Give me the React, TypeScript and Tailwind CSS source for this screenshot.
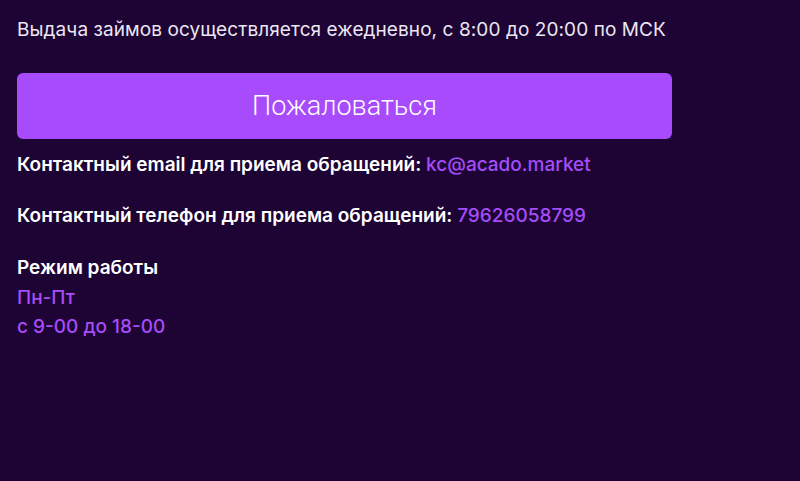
export default function App() {
  return (
    <div className="min-h-screen w-full bg-[#1d0434] px-[17px] pt-[18px] font-['Inter',sans-serif] text-white">
      <p className="text-[19px] leading-[24px] tracking-[0.08px] text-[#ece6f2]">
        Выдача займов осуществляется ежедневно, с 8:00 до 20:00 по МСК
      </p>

      <button className="mt-[31px] flex h-[66px] w-[655px] items-center justify-center rounded-[6px] bg-[#a74bfd] font-['Roboto',sans-serif] text-[27px] font-light text-white">
        Пожаловаться
      </button>

      <p className="mt-[14px] text-[19px] font-semibold leading-[24px]">
        Контактный email для приема обращений:{" "}
        <span className="font-medium text-[#a64cf8]">kc@acado.market</span>
      </p>

      <p className="mt-[27px] text-[19px] font-semibold leading-[24px]">
        Контактный телефон для приема обращений:{" "}
        <span className="font-medium text-[#a64cf8]">79626058799</span>
      </p>

      <div className="mt-[25px] text-[19px] leading-[29.5px]">
        <p className="font-semibold">Режим работы</p>
        <p className="font-medium text-[#a64cf8]">Пн-Пт</p>
        <p className="font-medium text-[#a64cf8]">с 9-00 до 18-00</p>
      </div>
    </div>
  );
}
